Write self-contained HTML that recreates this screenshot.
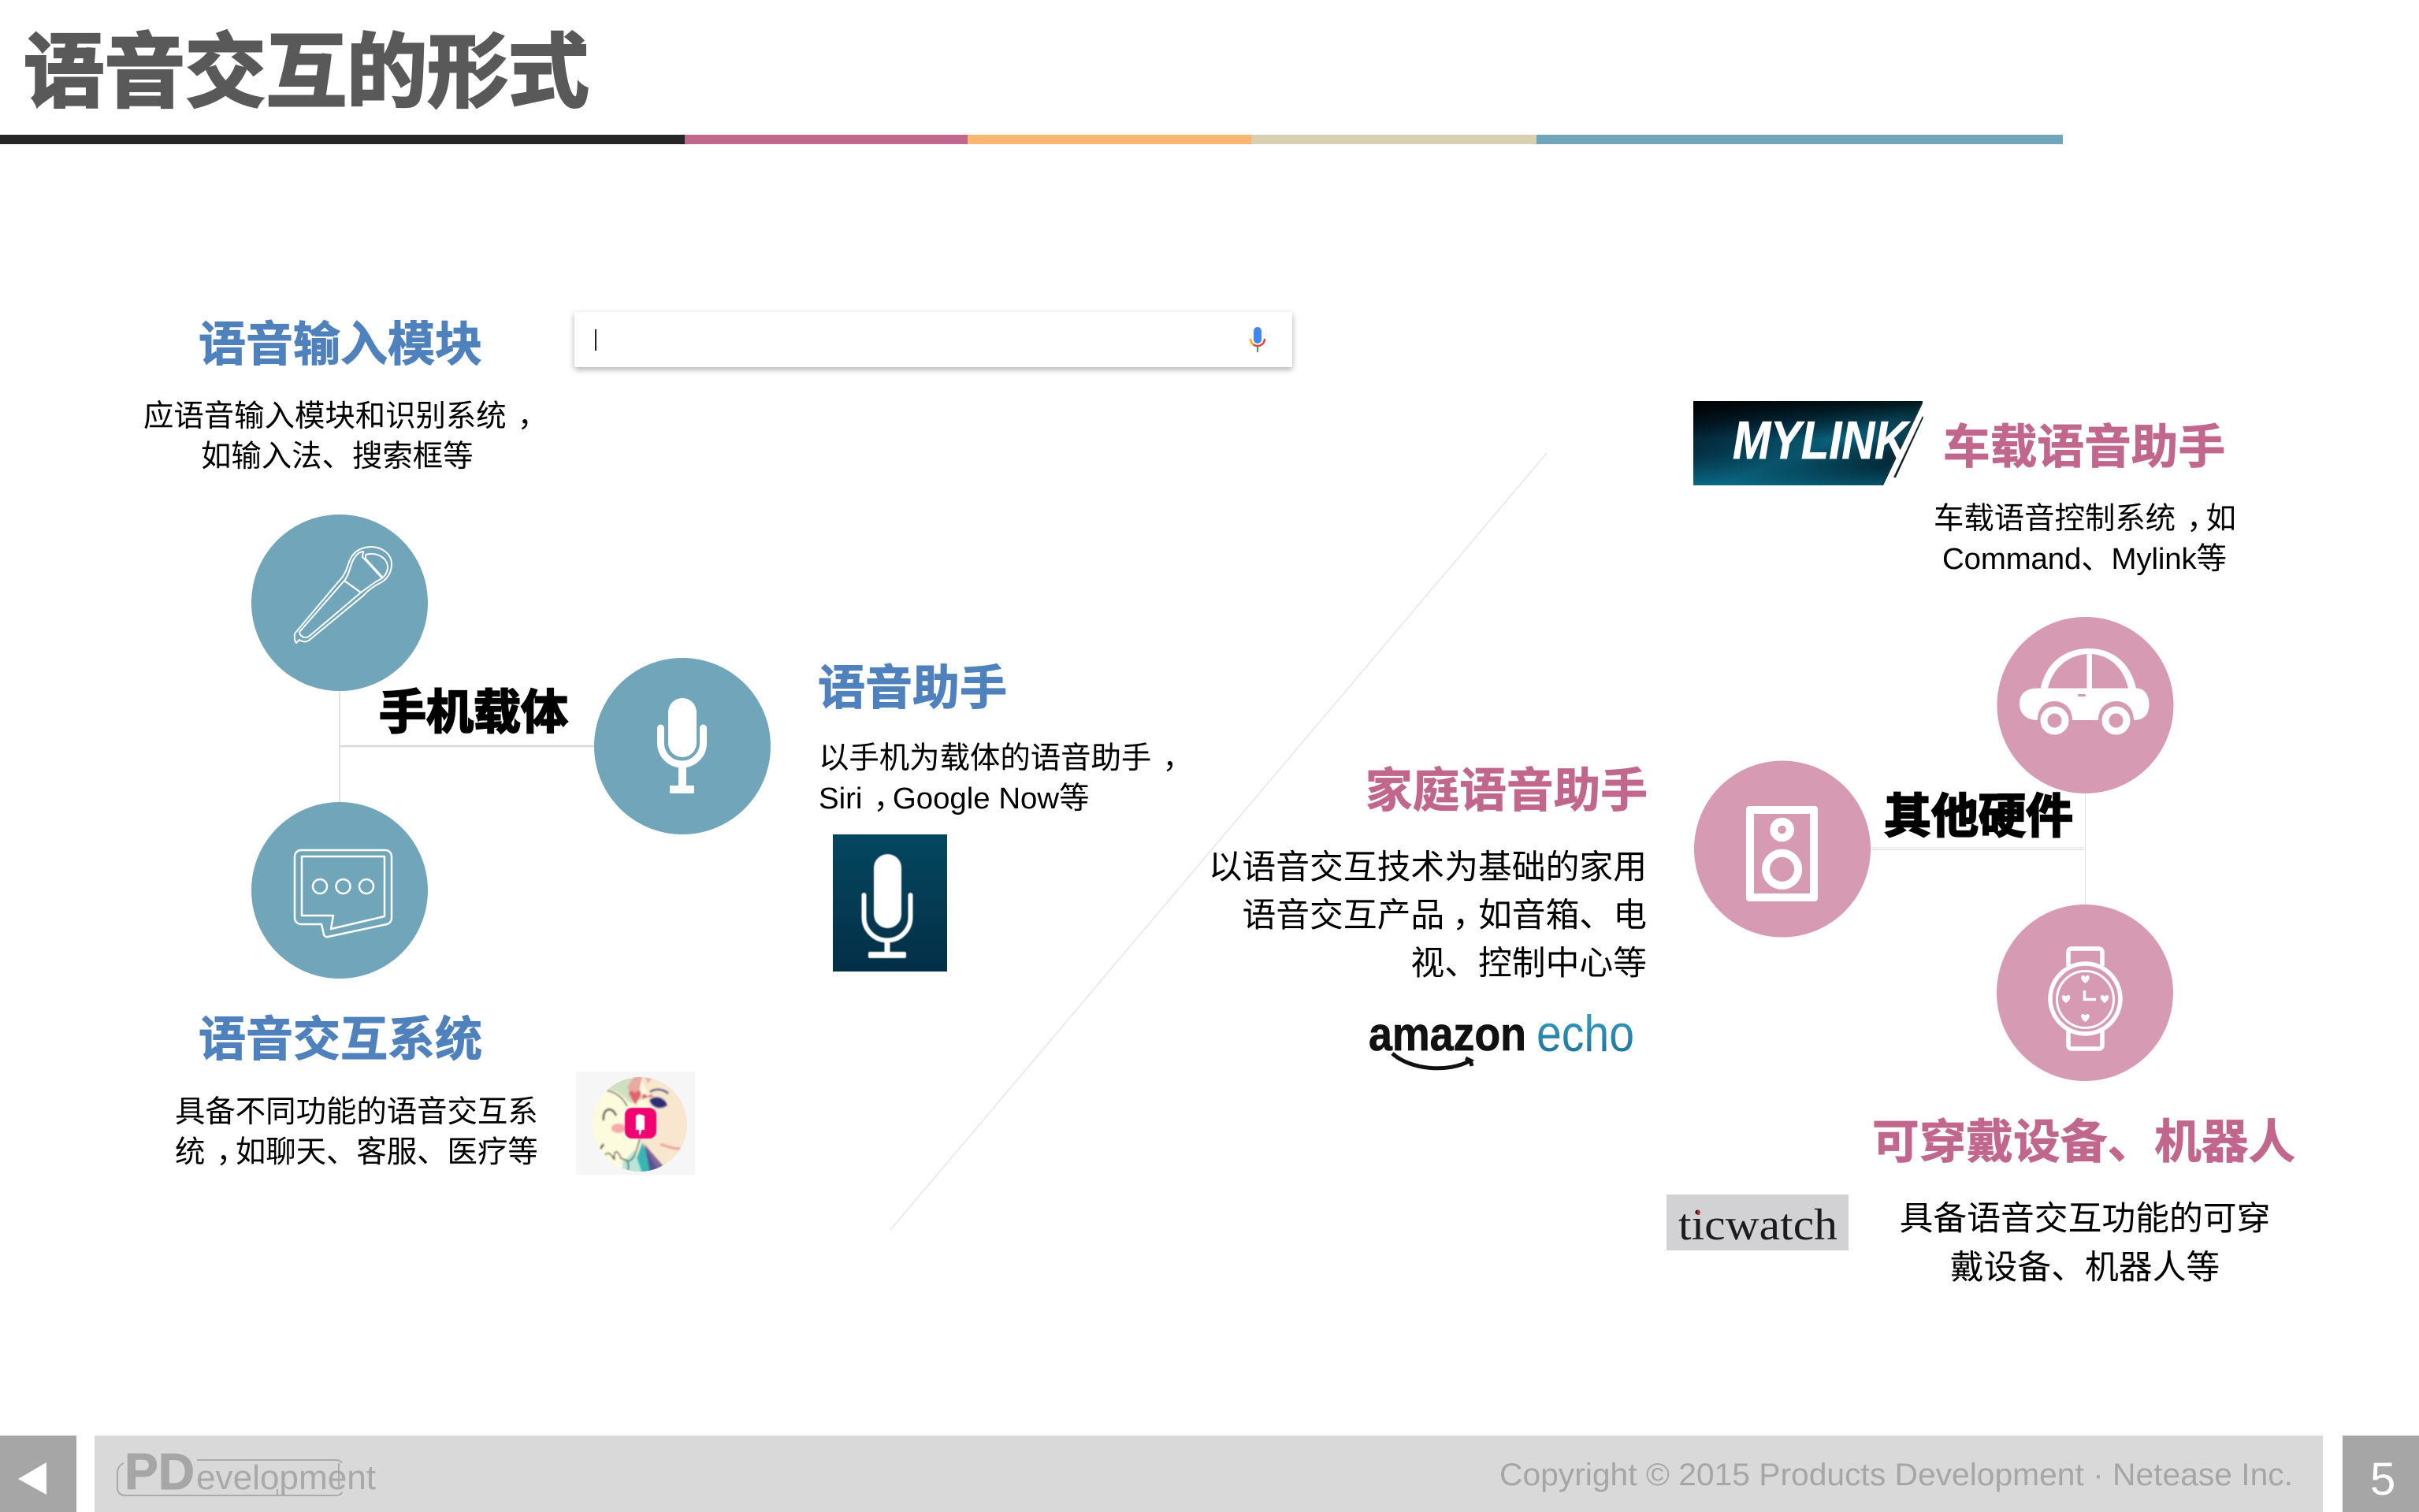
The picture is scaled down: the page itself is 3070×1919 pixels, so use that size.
<!DOCTYPE html>
<html lang="zh-CN"><head><meta charset="utf-8"><title>语音交互的形式</title>
<style>
html,body{margin:0;padding:0;background:#fff;width:3070px;height:1919px;overflow:hidden}
svg{display:block;position:absolute;left:0;top:0}
text{font-family:"Liberation Sans","Noto Sans CJK SC",sans-serif}
.cjk{font-family:"Noto Sans CJK SC",sans-serif}
.title{font-size:102.5px;font-weight:700;fill:#595959;stroke:#595959;stroke-width:3px}
.hb{font-size:60px;font-weight:700;fill:#4f81bd;stroke:#4f81bd;stroke-width:1px}
.hp{font-size:59.7px;font-weight:700;fill:#c1678d;stroke:#c1678d;stroke-width:.8px}
.hk{font-size:60px;font-weight:700;fill:#000;stroke:#000;stroke-width:2.2px}
.b{font-size:38.4px;fill:#000}
.b2{font-size:42.8px;fill:#000}
</style></head><body>
<svg width="3070" height="1919" viewBox="0 0 3070 1919" xmlns="http://www.w3.org/2000/svg">
<defs>
<linearGradient id="bl" x1="0" y1="0" x2="0" y2="1"><stop offset="0" stop-color="#04475f"/><stop offset="1" stop-color="#032f47"/></linearGradient>
<linearGradient id="ml" x1="0" y1="0" x2="1" y2="1"><stop offset="0" stop-color="#01060d"/><stop offset=".35" stop-color="#053a52"/><stop offset=".55" stop-color="#0a6480"/><stop offset=".8" stop-color="#02202f"/><stop offset="1" stop-color="#010a14"/></linearGradient>
<linearGradient id="ml2" x1="0" y1="0" x2="0" y2="1"><stop offset="0" stop-color="#000" stop-opacity=".75"/><stop offset=".45" stop-color="#000" stop-opacity="0"/><stop offset="1" stop-color="#0a6f8c" stop-opacity=".7"/></linearGradient>
<linearGradient id="ec" x1="0" y1="0" x2="0" y2="1"><stop offset="0" stop-color="#38a6c8"/><stop offset="1" stop-color="#1c6d96"/></linearGradient>
<filter id="sh" x="-5%" y="-30%" width="110%" height="170%"><feDropShadow dx="0" dy="3" stdDeviation="4" flood-color="#000" flood-opacity=".32"/></filter>
<filter id="bl1"><feGaussianBlur stdDeviation="1"/></filter>
<filter id="bl2"><feGaussianBlur stdDeviation=".5"/></filter>
<clipPath id="av"><circle cx="812" cy="1427" r="60"/></clipPath>
<clipPath id="mlc"><polygon points="2149,509 2440,509 2388,616 2149,616"/></clipPath>
<path id="ht" d="M0 5 C-7 0 -6 -5 -3 -5 C-1.500 -5 -.5 -4 0 -3 C.5 -4 1.500 -5 3 -5 C6 -5 7 0 0 5Z" fill="#fff"/>
</defs>

<!-- header -->
<text class="title cjk" x="30" y="127">语音交互的形式</text>
<rect x="0" y="171" width="869" height="12" fill="#262626"/>
<rect x="869" y="171" width="359" height="12" fill="#c1678d"/>
<rect x="1228" y="171" width="360" height="12" fill="#fbb673"/>
<rect x="1588" y="171" width="362" height="12" fill="#d9cfb1"/>
<rect x="1950" y="171" width="668" height="12" fill="#71a5b9"/>

<!-- diagonal -->
<line x1="1963" y1="575" x2="1130" y2="1561" stroke="#e6e6e6" stroke-width="1.500"/>

<!-- left connectors -->
<line x1="431" y1="877" x2="431" y2="1018" stroke="#d9d9d9" stroke-width="1.500"/>
<line x1="431" y1="947" x2="754" y2="947" stroke="#d9d9d9" stroke-width="2.500"/>
<circle cx="431" cy="765" r="112" fill="#71a5b9"/>
<circle cx="431" cy="1130" r="112" fill="#71a5b9"/>
<circle cx="866" cy="947" r="112" fill="#71a5b9"/>

<!-- hand mic -->
<g fill="none" stroke="#fff" stroke-width="2" stroke-linejoin="round">
<path d="M375 803 L434 733 C438 728 440 722 442 716 C445 706 452 695 470 694 C486 694 497 704 497 716 C497 727 491 735 484 739 C476 743 468 748 461 756 L393 812 C388 816 382 814 380 812 L376 816 L374 812 C374 808 373 805 375 803Z"/>
<path d="M380 802 L437 737 L458 752 L393 807 C388 811 381 809 380 802Z"/>
<path d="M437 737 C442 731 444 722 446 716 C449 707 455 700 461 700 L460 707 L463 710 L485 734 C476 738 468 745 458 752Z" />
<path d="M464 704 C478 700 492 708 492 720 C492 726 489 730 486 733 L464 709Z"/>
</g>

<!-- chat icon -->
<g fill="none" stroke="#fff" stroke-linejoin="round">
<path stroke-width="2.500" d="M382 1079 H489 a8 8 0 0 1 8 8 V1165 a8 8 0 0 1 -6 8 L416 1189 a4 4 0 0 1 -5 -3 L408 1173 H382 a8 8 0 0 1 -8 -8 V1087 a8 8 0 0 1 8 -8Z"/>
<path stroke-width="2.500" d="M383 1087 H488 V1163 L420 1179 L423 1162 H383Z"/>
<circle cx="406" cy="1125" r="9" stroke-width="2.500"/>
<circle cx="435.500" cy="1125" r="9" stroke-width="2.500"/>
<circle cx="465" cy="1125" r="9" stroke-width="2.500"/>
</g>

<!-- circle mic -->
<g fill="#fff">
<rect x="848" y="886" width="36" height="75" rx="18"/>
<path d="M838.500 924 V943 a27 27 0 0 0 54 0 V924" fill="none" stroke="#fff" stroke-width="9" stroke-linecap="round"/>
<rect x="861" y="972" width="10" height="28"/>
<rect x="850" y="997" width="31" height="10"/>
</g>

<!-- left text -->
<text class="hk cjk" x="481" y="925">手机载体</text>
<text class="hb cjk" x="252" y="458">语音输入模块</text>
<text class="b" x="182" y="541">应语音输入模块和识别系统<tspan dx="14">，</tspan></text>
<text class="b" x="255" y="592">如输入法、搜索框等</text>
<text class="hb cjk" x="1038" y="894">语音助手</text>
<text class="b" x="1039" y="975">以手机为载体的语音助手<tspan dx="14">，</tspan></text>
<text class="b" x="1039" y="1026">Siri<tspan dx="14">，</tspan><tspan dx="-14">Google Now等</tspan></text>
<text class="hb cjk" x="252" y="1340">语音交互系统</text>
<text class="b" x="222" y="1424">具备不同功能的语音交互系</text>
<text class="b" x="222" y="1475">统<tspan dx="14">，</tspan><tspan dx="-14">如聊天、客服、医疗等</tspan></text>

<!-- search box -->
<rect x="729" y="396" width="911" height="70" fill="#fff" filter="url(#sh)"/>
<rect x="755" y="418" width="2" height="27" fill="#222"/>
<rect x="1591" y="415" width="10" height="21" rx="5" fill="#4285f4"/>
<path d="M1587 430 a9 9 0 0 0 18 0" fill="none" stroke="#ea4335" stroke-width="2.500"/>
<path d="M1587 430 a9 9 0 0 0 4 7" fill="none" stroke="#fbbc05" stroke-width="2.500"/>
<rect x="1595" y="440" width="2" height="7" fill="#34a853"/>

<!-- blue mic -->
<rect x="1057" y="1059" width="145" height="174" fill="url(#bl)"/>
<g filter="url(#bl2)">
<rect x="1109" y="1084" width="35" height="94" rx="17.500" fill="#fff"/>
<path d="M1096.500 1136 V1164 a29.500 29.500 0 0 0 59 0 V1136" fill="none" stroke="#fff" stroke-width="6" stroke-linecap="round"/>
<rect x="1122.500" y="1192" width="7" height="18" fill="#fff"/>
<rect x="1102" y="1208" width="48" height="8" rx="2" fill="#fff"/>
</g>

<!-- avatar -->
<rect x="731" y="1360" width="151" height="131" fill="#f6f6f6"/>
<g clip-path="url(#av)">
<g filter="url(#bl1)">
<rect x="750" y="1365" width="125" height="125" fill="#fdfbdd"/>
<path d="M808 1360 L880 1360 L880 1490 L822 1490 L812 1445 L832 1405 Z" fill="#f8e6cf"/>
<path d="M780 1368 L808 1368 L816 1395 L800 1400 C790 1390 785 1385 770 1382Z" fill="#cfe0c0"/>
<path d="M796 1380 L806 1364 L815 1366 L808 1402Z" fill="#e9a9a5"/>
<path d="M800 1392 C794 1384 804 1382 806 1388 C810 1380 818 1386 810 1396 L806 1402Z" fill="#e0646f"/>
<path d="M816 1395 C812 1388 820 1386 822 1392 C826 1386 834 1390 824 1402Z" fill="#e0646f"/>
<path d="M815 1358 L836 1358 L822 1376 Z" fill="#eab7aa"/>
<path d="M816 1395 C825 1390 850 1392 848 1402 C838 1410 826 1406 822 1402Z" fill="#fff2dc"/>
<path d="M824 1396 C832 1388 846 1394 847 1403 C838 1410 826 1406 824 1396Z" fill="#2f2e78"/>
<path d="M825 1386 C832 1381 842 1382 848 1388" fill="none" stroke="#2f2e78" stroke-width="2.500"/>
<path d="M838 1452 C848 1456 856 1458 864 1458" fill="none" stroke="#ee9b9b" stroke-width="3"/>
<path d="M815 1450 L838 1490 L800 1490Z" fill="#37b6b5"/>
<path d="M818 1452 L842 1480 L825 1490Z" fill="#5c3a88" opacity=".75"/>
<path d="M790 1475 L805 1460 L815 1490 L790 1490Z" fill="#b9e6d8"/>
<ellipse cx="785" cy="1432" rx="9" ry="6" fill="#f7a9a5"/>
<g fill="none" stroke="#222" stroke-width="1.500">
<path d="M770 1384 C780 1386 790 1392 796 1404"/>
<path d="M766 1422 C764 1408 776 1402 782 1416" stroke-width="2.500"/>
<path d="M766 1452 L762 1458" stroke-width="2.500"/>
<path d="M768 1466 C772 1460 776 1466 780 1472 C778 1460 784 1458 788 1470 L798 1474 C806 1470 808 1460 812 1445"/>
<path d="M796 1475 C800 1482 796 1486 794 1490"/>
</g>
</g>
</g>
<rect x="793" y="1406" width="40" height="39" rx="9" fill="#f0046f" filter="url(#bl2)"/>
<path d="M807 1416 L811 1414 L818 1416 L818 1434 L814 1434 L813 1440 L811 1440 L811 1434 L807 1434Z" fill="#fff" filter="url(#bl2)"/>

<!-- right top -->
<g clip-path="url(#mlc)">
<rect x="2149" y="509" width="291" height="107" fill="url(#ml)"/>
<rect x="2149" y="509" width="291" height="107" fill="url(#ml2)"/>
</g>
<polygon points="2440,509 2440,512 2390,616 2388,616" fill="#06293c"/>
<text x="2199" y="582" font-size="68" font-weight="700" font-style="italic" fill="#fff" stroke="#fff" stroke-width=".8" textLength="222" lengthAdjust="spacingAndGlyphs">MYLINK</text>
<polygon points="2440,528 2441,530 2406,606 2403,606" fill="#14202c"/>
<text class="hp cjk" x="2466" y="588">车载语音助手</text>
<text class="b" x="2454" y="671">车载语音控制系统<tspan dx="14">，</tspan><tspan dx="-14">如</tspan></text>
<text class="b" x="2465" y="722" textLength="361" lengthAdjust="spacing">Command、Mylink等</text>

<!-- right connectors -->
<line x1="2646.500" y1="1007" x2="2646.500" y2="1075.500" stroke="#dcdcdc" stroke-width="1"/>
<line x1="2646.500" y1="1079" x2="2646.500" y2="1148" stroke="#dcdcdc" stroke-width="1"/>
<line x1="2373" y1="1076" x2="2647" y2="1076" stroke="#dcdcdc" stroke-width="1"/>
<line x1="2373" y1="1078.500" x2="2647" y2="1078.500" stroke="#dcdcdc" stroke-width="1"/>
<circle cx="2646.500" cy="895" r="112" fill="#d69ab3"/>
<circle cx="2262" cy="1077.500" r="112" fill="#d69ab3"/>
<circle cx="2646" cy="1260" r="112" fill="#d69ab3"/>

<!-- car -->
<path d="M2563 893 C2563 880 2572 873.500 2585 873.500 H2590 C2596 842 2620 823 2651 823 C2682 823 2704 842 2711 873.500 H2712 C2721 873.500 2727.500 882 2727.500 893 C2727.500 906 2722 914 2708 914 C2708 899 2698 890 2686 890 C2673 890 2663 899 2663 914 H2630 C2630 899 2620 890 2607 890 C2595 890 2586 899 2586 914 C2572 914 2563 906 2563 893Z" fill="#fff"/>
<path d="M2599 873.500 C2605 848 2624 832 2648.500 830 V873.500Z" fill="#d69ab3"/>
<path d="M2655 830 C2678 832 2695 848 2701 873.500 H2655Z" fill="#d69ab3"/>
<rect x="2637" y="881" width="10" height="3" rx="1" fill="#d69ab3"/>
<circle cx="2607.500" cy="914.500" r="13.500" fill="none" stroke="#fff" stroke-width="9"/>
<circle cx="2685.500" cy="914.500" r="13.500" fill="none" stroke="#fff" stroke-width="9"/>

<!-- speaker -->
<rect x="2216" y="1023" width="91" height="121" rx="4" fill="#fff"/>
<rect x="2226" y="1033" width="71" height="101" fill="#d69ab3"/>
<circle cx="2261.600" cy="1053" r="10.300" fill="none" stroke="#fff" stroke-width="10"/>
<circle cx="2261.600" cy="1103.300" r="20.500" fill="none" stroke="#fff" stroke-width="10"/>

<!-- watch -->
<g fill="none" stroke="#fff">
<path d="M2625 1226 V1208 a4 4 0 0 1 4 -4 H2664 a4 4 0 0 1 4 4 V1226" stroke-width="5.500"/>
<path d="M2625 1308 V1327 a4 4 0 0 0 4 4 H2664 a4 4 0 0 0 4 -4 V1308" stroke-width="5.500"/>
<circle cx="2646.500" cy="1267.500" r="44.500" stroke-width="5.500"/>
<circle cx="2646.500" cy="1268.500" r="36" stroke-width="3"/>
<path d="M2645.500 1257 V1268.500 H2660" stroke-width="3.500"/>
</g>
<use href="#ht" x="2646.500" y="1243"/>
<use href="#ht" x="2671" y="1268"/>
<use href="#ht" x="2646.500" y="1292"/>
<use href="#ht" x="2622" y="1268"/>

<!-- right mid -->
<text class="hk cjk" x="2391" y="1057">其他硬件</text>
<text class="hp cjk" x="2091" y="1024" text-anchor="end">家庭语音助手</text>
<text class="b2" x="2090" y="1115" text-anchor="end">以语音交互技术为基础的家用</text>
<text class="b2" x="2090" y="1176" text-anchor="end">语音交互产品<tspan dx="10">，</tspan><tspan dx="-10">如音箱、电</tspan></text>
<text class="b2" x="2090" y="1237" text-anchor="end">视、控制中心等</text>

<!-- amazon echo -->
<text x="1737" y="1333" font-size="60" font-weight="700" fill="#111" stroke="#111" stroke-width=".8" textLength="200" lengthAdjust="spacingAndGlyphs">amazon</text>
<text x="1950" y="1334" font-size="65" fill="url(#ec)" textLength="124" lengthAdjust="spacingAndGlyphs">echo</text>
<path d="M1767 1337 C1790 1358 1838 1362 1866 1346 L1860 1343 M1866 1346 L1868 1353" fill="none" stroke="#111" stroke-width="5"/>

<!-- wearables -->
<text class="hp cjk" x="2376" y="1470">可穿戴设备、机器人</text>
<rect x="2115" y="1516" width="231" height="71" fill="#d2d2d4"/>
<text font-family="Liberation Serif" style="font-family:'Liberation Serif',serif" x="2130" y="1573" font-size="56" fill="#1c1c1e" textLength="202" lengthAdjust="spacingAndGlyphs">ticwatch</text>
<rect x="2154" y="1536" width="3" height="6" fill="#c8242c"/>
<text class="b2" x="2646" y="1561" text-anchor="middle">具备语音交互功能的可穿</text>
<text class="b2" x="2646" y="1623" text-anchor="middle">戴设备、机器人等</text>

<!-- footer -->
<rect x="0" y="1822" width="97" height="97" fill="#a6a6a6"/>
<polygon points="23,1877 59,1856 59,1897" fill="#fff"/>
<rect x="120" y="1822" width="2828" height="97" fill="#d9d9d9"/>
<rect x="2973" y="1822" width="97" height="97" fill="#a6a6a6"/>
<text x="158" y="1890" font-size="65" font-weight="700" fill="#a6a6a6" stroke="#a6a6a6" stroke-width="1" textLength="89" lengthAdjust="spacingAndGlyphs">PD</text>
<text x="249" y="1890" font-size="44" fill="#a9a9a9" textLength="228" lengthAdjust="spacingAndGlyphs">evelopment</text>
<path d="M157 1857 C151 1860 149 1864 149 1870 V1888 C149 1895 153 1898 160 1898 H424 C430 1898 433 1897 434 1894 M250 1853 H424 C430 1853 433 1854 434 1857 M430 1857 V1890 M352 1890 V1898" fill="none" stroke="#aaa" stroke-width="2"/>
<text x="1903" y="1885" font-size="40" fill="#a6a6a6" textLength="1007" lengthAdjust="spacingAndGlyphs">Copyright © 2015 Products Development · Netease Inc.</text>
<text x="3008" y="1897" font-size="58" fill="#fff">5</text>
</svg>
</body></html>
